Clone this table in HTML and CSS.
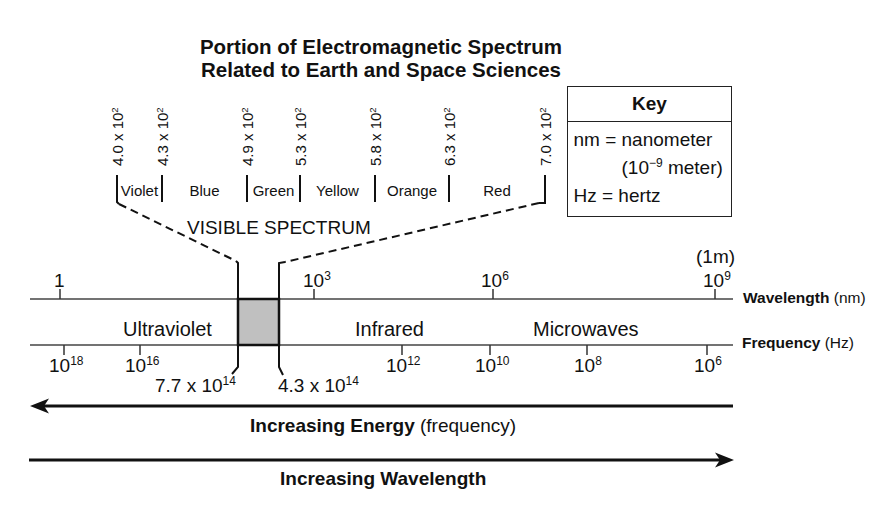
FILE: index.html
```html
<!DOCTYPE html>
<html lang="en">
<head>
<meta charset="utf-8">
<title>Portion of Electromagnetic Spectrum</title>
<link rel="stylesheet" href="styles.css">
</head>
<body>
<div class="figure">
  <h1 class="title">Portion of Electromagnetic Spectrum<br>Related to Earth and Space Sciences</h1>

  <svg class="diagram" width="892" height="507" viewBox="0 0 892 507" aria-label="Electromagnetic spectrum diagram">
    <!-- visible spectrum band dividers -->
    <g class="bars">
      <line x1="162" y1="175" x2="162" y2="202"/>
      <line x1="247" y1="175" x2="247" y2="202"/>
      <line x1="300" y1="175" x2="300" y2="202"/>
      <line x1="375" y1="175" x2="375" y2="202"/>
      <line x1="449" y1="175" x2="449" y2="202"/>
    </g>
    <!-- bracket lines -->
    <polyline class="bracket" points="117,175 117,202 119,204"/>
    <line class="dash" x1="119" y1="204" x2="236" y2="261"/>
    <polyline class="bracket" points="236,261 238,263 238,367 232,374"/>
    <polyline class="bracket" points="545,175 545,203 539,203"/>
    <line class="dash" x1="539" y1="203" x2="285" y2="262"/>
    <polyline class="bracket" points="285,262 279,263 279,367 283,375"/>

    <!-- rotated wavelength labels -->
    <g class="rot">
      <text transform="translate(123,166) rotate(-90)">4.0 x 10<tspan dy="-5" class="sup-s">2</tspan></text>
      <text transform="translate(167.5,166) rotate(-90)">4.3 x 10<tspan dy="-5" class="sup-s">2</tspan></text>
      <text transform="translate(252.5,166) rotate(-90)">4.9 x 10<tspan dy="-5" class="sup-s">2</tspan></text>
      <text transform="translate(305.5,166) rotate(-90)">5.3 x 10<tspan dy="-5" class="sup-s">2</tspan></text>
      <text transform="translate(380.5,166) rotate(-90)">5.8 x 10<tspan dy="-5" class="sup-s">2</tspan></text>
      <text transform="translate(454.5,166) rotate(-90)">6.3 x 10<tspan dy="-5" class="sup-s">2</tspan></text>
      <text transform="translate(550.5,166) rotate(-90)">7.0 x 10<tspan dy="-5" class="sup-s">2</tspan></text>
    </g>

    <!-- colour band names -->
    <g class="band">
      <text x="139.5" y="196">Violet</text>
      <text x="204.5" y="196">Blue</text>
      <text x="273.5" y="196">Green</text>
      <text x="337.5" y="196">Yellow</text>
      <text x="412" y="196">Orange</text>
      <text x="497" y="196">Red</text>
    </g>

    <text class="label" x="187" y="234">VISIBLE SPECTRUM</text>

    <!-- axes -->
    <line class="axis" x1="30" y1="299" x2="733" y2="299"/>
    <line class="axis" x1="30" y1="345" x2="733" y2="345"/>
    <rect class="visible" x="238" y="299" width="41" height="46"/>

    <g class="tick">
      <line x1="60" y1="289" x2="60" y2="299"/>
      <line x1="314" y1="289" x2="314" y2="299"/>
      <line x1="493" y1="289" x2="493" y2="299"/>
      <line x1="715" y1="289" x2="715" y2="299"/>
      <line x1="64" y1="345" x2="64" y2="355"/>
      <line x1="140" y1="345" x2="140" y2="355"/>
      <line x1="402" y1="345" x2="402" y2="355"/>
      <line x1="490" y1="345" x2="490" y2="355"/>
      <line x1="587" y1="345" x2="587" y2="355"/>
      <line x1="707" y1="345" x2="707" y2="355"/>
    </g>

    <g class="num">
      <text x="54" y="287">1</text>
      <text x="303" y="287">10<tspan dy="-7" class="sup">3</tspan></text>
      <text x="481" y="287">10<tspan dy="-7" class="sup">6</tspan></text>
      <text x="703" y="287">10<tspan dy="-7" class="sup">9</tspan></text>
      <text x="696" y="263">(1m)</text>

      <text x="49" y="372">10<tspan dy="-7" class="sup">18</tspan></text>
      <text x="125" y="372">10<tspan dy="-7" class="sup">16</tspan></text>
      <text x="386" y="372">10<tspan dy="-7" class="sup">12</tspan></text>
      <text x="475" y="372">10<tspan dy="-7" class="sup">10</tspan></text>
      <text x="574" y="372">10<tspan dy="-7" class="sup">8</tspan></text>
      <text x="694" y="372">10<tspan dy="-7" class="sup">6</tspan></text>

      <text x="155" y="392">7.7 x 10<tspan dy="-7" class="sup">14</tspan></text>
      <text x="278" y="392">4.3 x 10<tspan dy="-7" class="sup">14</tspan></text>
    </g>

    <g class="region">
      <text x="123" y="336">Ultraviolet</text>
      <text x="355" y="336">Infrared</text>
      <text x="533" y="336">Microwaves</text>
    </g>

    <text class="axis-name" x="743" y="303"><tspan class="b">Wavelength</tspan> (nm)</text>
    <text class="axis-name" x="742" y="348"><tspan class="b">Frequency</tspan> (Hz)</text>

    <!-- arrows -->
    <line class="arrow" x1="44" y1="406" x2="733" y2="406"/>
    <polygon class="head" points="30,406 49,398.5 44,406 49,413.5"/>
    <text class="caption" x="250" y="432"><tspan class="b">Increasing Energy</tspan> (frequency)</text>

    <line class="arrow" x1="29" y1="460" x2="720" y2="460"/>
    <polygon class="head" points="734,460 715,452.5 720,460 715,467.5"/>
    <text class="caption b" x="280" y="485">Increasing Wavelength</text>
  </svg>

  <div class="key">
    <div class="key-head">Key</div>
    <div class="key-body">
      <div class="key-row">nm = nanometer</div>
      <div class="key-row indent">(10<sup>−9</sup> meter)</div>
      <div class="key-row">Hz = hertz</div>
    </div>
  </div>
</div>
</body>
</html>
```

FILE: styles.css
```css
html, body {
  margin: 0;
  padding: 0;
  background: #ffffff;
}

body {
  font-family: "Liberation Sans", Arial, sans-serif;
  color: #111111;
}

.figure {
  position: relative;
  width: 892px;
  height: 507px;
  overflow: hidden;
  background: #ffffff;
}

.title {
  margin: 0;
  padding: 35px 130px 0 0;
  font-size: 20.5px;
  line-height: 23px;
  font-weight: bold;
  text-align: center;
  color: #111111;
}

.diagram {
  position: absolute;
  left: 0;
  top: 0;
}

.diagram text {
  font-family: "Liberation Sans", Arial, sans-serif;
  fill: #111111;
}

.bars line,
.bracket {
  stroke: #111111;
  stroke-width: 2;
  fill: none;
}

.dash {
  stroke: #111111;
  stroke-width: 2;
  stroke-dasharray: 8 5;
}

.rot text {
  font-size: 15px;
}

.sup-s {
  font-size: 9.5px;
}

.band text {
  font-size: 15px;
  text-anchor: middle;
}

.label {
  font-size: 19px;
}

.axis {
  stroke: #444444;
  stroke-width: 1.5;
}

.visible {
  fill: #c0c0c0;
  stroke: #111111;
  stroke-width: 2.5;
}

.tick line {
  stroke: #333333;
  stroke-width: 1.5;
}

.num text {
  font-size: 19px;
}

.sup {
  font-size: 12px;
}

.region text {
  font-size: 20px;
}

.axis-name {
  font-size: 15.5px;
}

.b {
  font-weight: bold;
}

.arrow {
  stroke: #111111;
  stroke-width: 3;
}

.head {
  fill: #111111;
}

.caption {
  font-size: 19px;
}

.key {
  position: absolute;
  left: 567px;
  top: 86px;
  width: 165px;
  height: 131px;
  box-sizing: border-box;
  border: 1.5px solid #222222;
  font-size: 19px;
  color: #111111;
  background: #ffffff;
}

.key-head {
  height: 34px;
  line-height: 34px;
  text-align: center;
  font-weight: bold;
  border-bottom: 1.5px solid #222222;
}

.key-body {
  padding: 4px 0 0 5.5px;
}

.key-row {
  line-height: 28px;
  white-space: nowrap;
}

.key-row.indent {
  padding-left: 48px;
}

.key-row sup {
  font-size: 12px;
  line-height: 0;
  vertical-align: 7px;
}
```
